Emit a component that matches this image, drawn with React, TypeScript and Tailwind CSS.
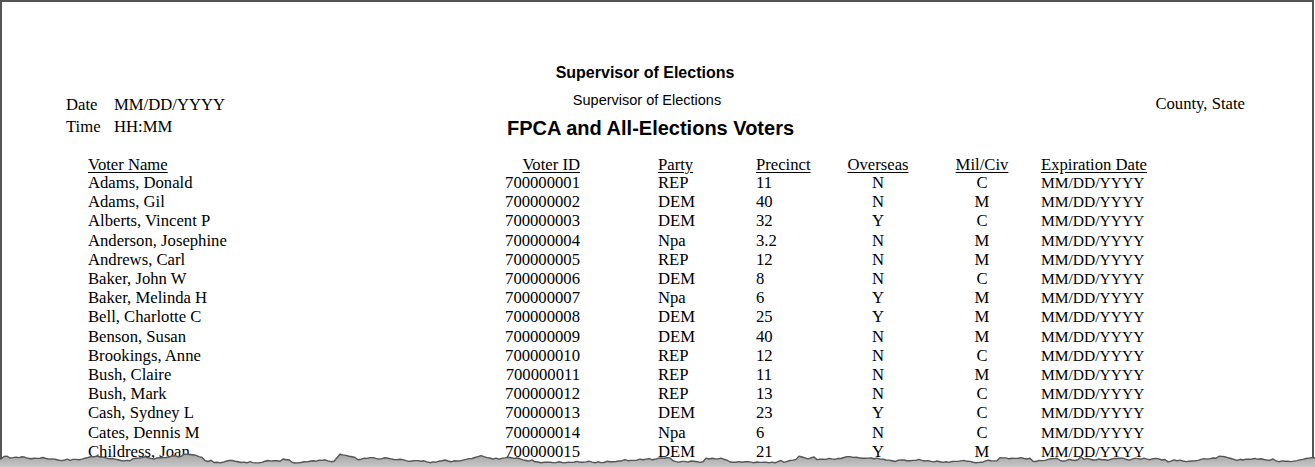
import React from "react";

type Row = [string, string, string, string, string, string];

const rows: Row[] = [
  ["Adams, Donald", "700000001", "REP", "11", "N", "C"],
  ["Adams, Gil", "700000002", "DEM", "40", "N", "M"],
  ["Alberts, Vincent P", "700000003", "DEM", "32", "Y", "C"],
  ["Anderson, Josephine", "700000004", "Npa", "3.2", "N", "M"],
  ["Andrews, Carl", "700000005", "REP", "12", "N", "M"],
  ["Baker, John W", "700000006", "DEM", "8", "N", "C"],
  ["Baker, Melinda H", "700000007", "Npa", "6", "Y", "M"],
  ["Bell, Charlotte C", "700000008", "DEM", "25", "Y", "M"],
  ["Benson, Susan", "700000009", "DEM", "40", "N", "M"],
  ["Brookings, Anne", "700000010", "REP", "12", "N", "C"],
  ["Bush, Claire", "700000011", "REP", "11", "N", "M"],
  ["Bush, Mark", "700000012", "REP", "13", "N", "C"],
  ["Cash, Sydney L", "700000013", "DEM", "23", "Y", "C"],
  ["Cates, Dennis M", "700000014", "Npa", "6", "N", "C"],
  ["Childress, Joan", "700000015", "DEM", "21", "Y", "M"],
];

function tornPoints(): [number, number][] {
  let seed = 987;
  const rnd = () => {
    seed = (seed * 1103515245 + 12345) % 2147483648;
    return seed / 2147483648;
  };
  const pts: [number, number][] = [];
  let y = 9;
  for (let x = -2; x <= 1320; x += 3) {
    y += (rnd() - 0.5) * 2.4;
    const r = rnd();
    if (r < 0.03) y -= 3;
    else if (r > 0.97) y += 3;
    y += (8 - y) * 0.06;
    if (y < 2.5) y = 2.5 + rnd();
    if (y > 12) y = 12 - rnd();
    pts.push([x, y]);
  }
  return pts;
}

function TornEdge() {
  const pts = tornPoints();
  const line = pts.map(([x, y]) => `${x.toFixed(1)},${y.toFixed(1)}`).join(" ");
  const poly = `${line} 1320,18 -2,18`;
  return (
    <svg
      className="absolute left-0 bottom-0"
      width={1315}
      height={16}
      viewBox="0 0 1315 16"
    >
      <defs>
        <linearGradient id="g" x1="0" y1="0" x2="0" y2="1">
          <stop offset="0" stopColor="#a5a5a5" />
          <stop offset="1" stopColor="#cccccc" />
        </linearGradient>
      </defs>
      <polygon points={poly} fill="url(#g)" />
      <polyline points={line} fill="none" stroke="#555" strokeWidth={1.4} strokeLinejoin="round" />
    </svg>
  );
}

export default function App() {
  const serif = "font-['Liberation_Serif',serif]";
  const sans = "font-['Liberation_Sans',sans-serif]";
  return (
    <div className="relative w-[1315px] h-[467px] overflow-hidden bg-white text-black">
      <div className="w-[1314px] h-full border-t-2 border-l-2 border-r-2 border-[#555555] bg-white">
        <div className="grid grid-cols-[380px_404px_1fr] pt-[61px] pl-[64px] pr-[67px]">
          <div className={`${serif} text-[16.67px] mt-[31px]`}>
            <div className="flex leading-[22px]">
              <span className="w-[48px]">Date</span>
              <span>MM/DD/YYYY</span>
            </div>
            <div className="flex leading-[22px]">
              <span className="w-[48px]">Time</span>
              <span>HH:MM</span>
            </div>
          </div>
          <div className={`${sans} flex flex-col items-center`}>
            <div className="font-bold text-[16px] leading-[20px] mr-[6px]">
              Supervisor of Elections
            </div>
            <div className="text-[14.5px] leading-[20px] mt-[7px] mr-[2px]">
              Supervisor of Elections
            </div>
            <div className="font-bold text-[20px] leading-[24px] mt-[6px] ml-[5px]">
              FPCA and All-Elections Voters
            </div>
          </div>
          <div className={`${serif} text-[16.67px] leading-[20px] mt-[31px] text-right`}>
            County, State
          </div>
        </div>

        <div
          className={`${serif} text-[16.67px] mt-[16px] pl-[86px] grid grid-cols-[412px_80px_176px_72px_100px_108px_1fr]`}
        >
          <div className="leading-[17px] underline underline-offset-[2px]">Voter Name</div>
          <div className="leading-[17px] text-right underline underline-offset-[2px]">Voter ID</div>
          <div className="leading-[17px] pl-[78px]">
            <span className="underline underline-offset-[2px]">Party</span>
          </div>
          <div className="leading-[17px]">
            <span className="underline underline-offset-[2px]">Precinct</span>
          </div>
          <div className="leading-[17px] text-center">
            <span className="underline underline-offset-[2px]">Overseas</span>
          </div>
          <div className="leading-[17px] text-center">
            <span className="underline underline-offset-[2px]">Mil/Civ</span>
          </div>
          <div className="leading-[17px] pl-[5px]">
            <span className="underline underline-offset-[2px]">Expiration Date</span>
          </div>
          {rows.map((r) => (
            <React.Fragment key={r[1]}>
              <div className="leading-[19.2px]">{r[0]}</div>
              <div className="leading-[19.2px] text-right">{r[1]}</div>
              <div className="leading-[19.2px] pl-[78px]">{r[2]}</div>
              <div className="leading-[19.2px]">{r[3]}</div>
              <div className="leading-[19.2px] text-center">{r[4]}</div>
              <div className="leading-[19.2px] text-center">{r[5]}</div>
              <div className="leading-[19.2px] pl-[5px] text-[15.5px]">MM/DD/YYYY</div>
            </React.Fragment>
          ))}
        </div>
      </div>
      <TornEdge />
    </div>
  );
}
